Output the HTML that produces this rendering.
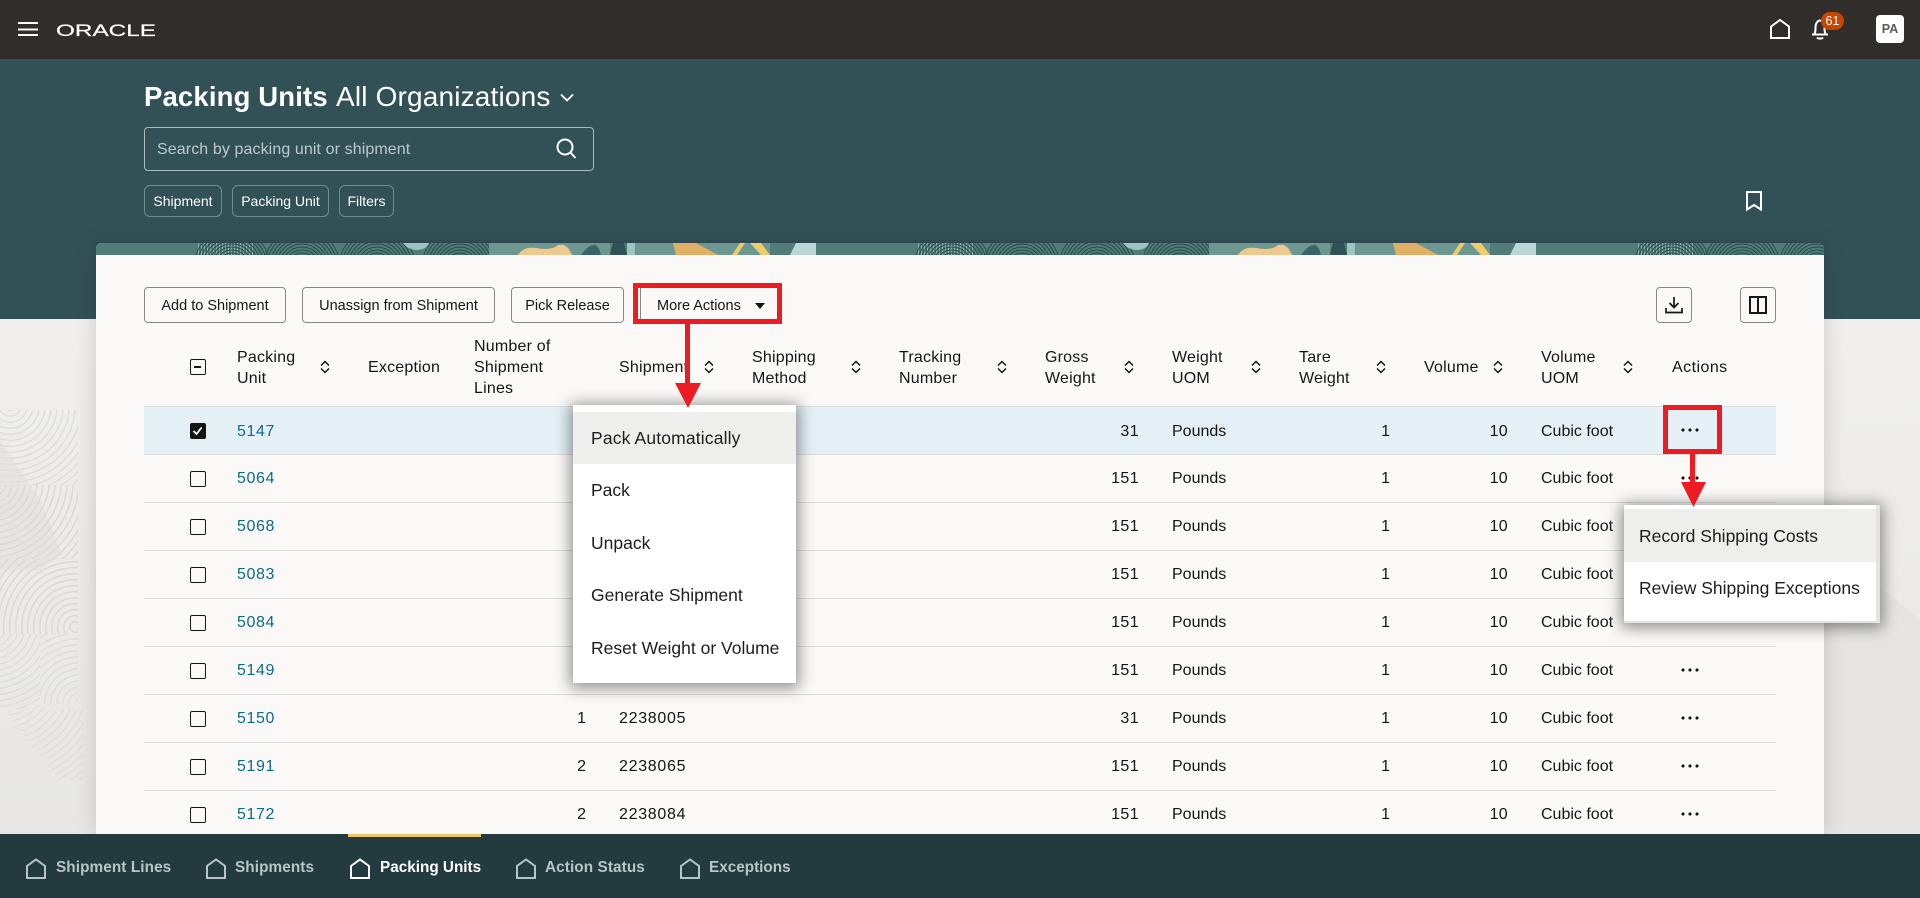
<!DOCTYPE html>
<html lang="en"><head><meta charset="utf-8"><title>Packing Units</title>
<style>
*{box-sizing:border-box;margin:0;padding:0}
html,body{width:1920px;height:898px;overflow:hidden}
body{position:relative;font-family:"Liberation Sans",Arial,sans-serif;color:#161513;background:linear-gradient(180deg,#f0efed 319px,#e8e7e5 834px)}
span,svg{position:absolute;white-space:nowrap}
#top{position:absolute;left:0;top:0;width:1920px;height:59px;background:#312d2a}
#teal{position:absolute;left:0;top:59px;width:1920px;height:260px;background:#325157}
.chip{position:absolute;top:185px;height:32px;border:1px solid #6f8b8e;border-radius:6px;color:#fff;font-size:14px;line-height:30px;text-align:center}
.deco{position:absolute;width:78px;height:75px}
#card{position:absolute;left:96px;top:243px;width:1728px;height:591px;background:#faf9f7;border-radius:6px 6px 0 0;box-shadow:0 0 22px rgba(0,0,0,.16)}
.btn{position:absolute;top:287px;height:36px;border:1px solid #8a8885;border-radius:4px;font-size:14.5px;line-height:36px;text-align:center;background:#faf9f7}
.h{position:absolute;font-size:16px;line-height:21px;letter-spacing:.2px;color:#161513}
.so{position:absolute;top:360px;width:10px;height:14px;fill:none;stroke:#161513;stroke-width:1.5}
.r{position:absolute;left:144px;width:1632px;height:49px;border-bottom:1px solid #dfddd9;font-size:16px;line-height:49px}
.r>*{position:absolute}
.sel{background:#e4f0f6;border-top:1px solid #d9dfe2}
.cb{left:46px;top:17px;width:16px;height:16px;border:1.6px solid #161513;border-radius:2px;background:#faf9f7}
.cb.on{background:#161513;top:16px}
.l{left:93px;color:#0d6a8c;letter-spacing:.6px}
.n{right:1190px}.sh{left:475px;letter-spacing:.7px}
.g{right:637px;letter-spacing:.4px}.p{left:1028px}.t{right:386px}.v{right:268px;letter-spacing:.3px}.u{left:1397px}
.d{left:1537px;top:22px;width:18px;height:4px;background:radial-gradient(circle at 2px 2px,#161513 1.4px,transparent 1.8px) 0 0/7px 4px repeat-x}
.sel .d{top:21px}
.menu{position:absolute;background:#fff;box-shadow:0 2px 14px 3px rgba(0,0,0,.42)}
.mi{position:absolute;left:0;width:100%;font-size:17.5px;color:#1f1d1b}
.mi.hv{background:#eeeeec}
#bar{position:absolute;left:0;top:834px;width:1920px;height:64px;background:#233a3f}
.tab{position:absolute;top:24px;font-size:15.3px;font-weight:700;line-height:20px;letter-spacing:.1px;color:#b8c5c7}
.ti{position:absolute;top:24px;width:22px;height:21px;fill:none;stroke:#b8c5c7;stroke-width:2}
.red{position:absolute;background:#ed1c24}
.box{position:absolute;border:5px solid #ed1c24}
</style></head><body>

<svg style="left:0;top:440px" width="96" height="130"><path d="M0 0L40 60 62 115 40 130H0Z" fill="#e6e5e3"/></svg>
<div class="deco" style="left:0;top:410px;background:repeating-radial-gradient(circle at 10px -5px,transparent 0 4.5px,#dededc 4.5px 6px)"></div>
<div class="deco" style="left:0;top:485px;height:74px;background:repeating-radial-gradient(circle at -10px -5px,transparent 0 4.5px,#dbdad8 4.5px 6px)"></div>
<div class="deco" style="left:0;top:559px;background:repeating-radial-gradient(circle at 75px 68px,transparent 0 4.5px,#dbdad8 4.5px 6px)"></div>
<div class="deco" style="left:0;top:634px;width:40px;background:repeating-radial-gradient(circle at -10px -10px,transparent 0 4.5px,#dededc 4.5px 6px)"></div>
<div class="deco" style="left:40px;top:634px;width:38px;height:70px;background:repeating-radial-gradient(circle at 40px 70px,transparent 0 4.5px,#dededc 4.5px 6px)"></div>
<div class="deco" style="left:5px;top:710px;height:70px;background:repeating-radial-gradient(circle at 0 -30px,transparent 0 4.5px,#e0dfdd 4.5px 6px);clip-path:polygon(0 0,100% 0,100% 100%,70% 100%)"></div>
<svg style="left:1824px;top:319px" width="96" height="515"><polygon points="20,240 96,300 96,515 0,515 0,200" fill="#e6e5e3"/></svg>

<div id="top"></div>
<div id="teal"></div>

<!-- top bar -->
<svg style="left:18px;top:21px" width="21" height="16" fill="#fff"><rect y="1" width="20" height="2"/><rect y="7.500" width="20" height="2"/><rect y="13" width="20" height="2"/></svg>
<svg style="left:56px;top:22px" width="104" height="16"><text x="0" y="14" font-family="Liberation Sans" font-size="17" fill="#fff" stroke="#fff" stroke-width=".2" textLength="100" lengthAdjust="spacingAndGlyphs">ORACLE</text></svg>
<svg style="left:1768px;top:17px" width="24" height="24" fill="none" stroke="#fff" stroke-width="2"><path d="M3 21V9.500L12 3l9 6.500V21Z"/></svg>
<svg style="left:1808px;top:17px" width="24" height="24" fill="none" stroke="#fff" stroke-width="2"><path d="M4 17.500h16M6 17.500c1.500-2 1.500-4 1.500-7 0-4 2-7 4.500-7s4.500 3 4.500 7c0 3 0 5 1.500 7M9 20.500c1 1.500 5 1.500 6 0"/></svg>
<div style="position:absolute;left:1821px;top:12px;width:23px;height:18px;border-radius:9px;background:#c74600;color:#fff;font-size:12.5px;line-height:18px;text-align:center">61</div>
<div style="position:absolute;left:1876px;top:15px;width:28px;height:28px;border-radius:4px;background:#fff;color:#5c5b59;font-size:12.5px;font-weight:700;line-height:28px;text-align:center">PA</div>

<!-- title -->
<span style="left:144px;top:79px;line-height:36px;font-size:27.5px;letter-spacing:.15px;font-weight:700;color:#fff">Packing Units</span>
<span style="left:336px;top:79px;line-height:36px;font-size:28px;letter-spacing:.17px;color:#fff">All Organizations</span>
<svg style="left:559px;top:92px" width="16" height="11" fill="none" stroke="#fff" stroke-width="1.800"><path d="M2 2.500l6 6 6-6"/></svg>
<div style="position:absolute;left:144px;top:127px;width:450px;height:44px;border:1px solid #a9babc;border-radius:4px"></div>
<span style="left:157px;top:139px;line-height:22px;font-size:16px;letter-spacing:.1px;color:#bcc9ca">Search by packing unit or shipment</span>
<svg style="left:555px;top:137px" width="22" height="22" fill="none" stroke="#fff" stroke-width="2"><circle cx="10" cy="10" r="7.500"/><path d="M15.500 15.500l5 5.500"/></svg>
<div class="chip" style="left:144px;width:78px">Shipment</div>
<div class="chip" style="left:232px;width:97px">Packing Unit</div>
<div class="chip" style="left:339px;width:55px">Filters</div>
<svg style="left:1745px;top:190px" width="18" height="22" fill="none" stroke="#fff" stroke-width="2"><path d="M2 2h14v17.500L9 15l-7 4.500Z"/></svg>

<!-- card -->
<div id="card"></div>
<svg style="left:96px;top:243px;border-radius:6px 6px 0 0" width="1728" height="12">
<defs>
<pattern id="vl" width="3" height="12" patternUnits="userSpaceOnUse"><rect width="1" height="12" fill="#8fb2ae"/></pattern>
<g id="dome" fill="none" stroke="#27494b" stroke-width="1"><circle r="8"/><circle r="11"/><circle r="14"/><circle r="17"/><circle r="20"/><circle r="23"/><circle r="26"/><circle r="29"/><circle r="32"/><circle r="35"/><circle r="38"/></g>
<g id="tile">
<rect x="0" width="760" height="12" fill="#517d79"/>
<rect x="100" width="58" height="12" fill="url(#vl)"/>
<use href="#dome" x="136" y="24"/><use href="#dome" x="206" y="24"/><use href="#dome" x="281" y="24"/><use href="#dome" x="364" y="24"/>
<path d="M307 0H333Q331 6 322 7 312 7 307 0Z" fill="#9cc4c3"/>
<rect x="393" width="121" height="12" fill="#6d9891"/>
<path d="M422 12Q428 3 440 5 455 8 462 2 470 0 474 8L476 12Z" fill="#edc98f"/>
<path d="M485 12Q493 1 500 2 504 6 505 12Z" fill="#3a6365"/>
<path d="M517 0H528L531 12H514Z" fill="#325157"/>
<rect x="531" width="143" height="12" fill="#6d9891"/>
<rect x="531" width="8" height="12" fill="#9cc4c3"/>
<path d="M577 0H600L622 12H580Z" fill="#e0b066"/>
<path d="M644 0H649L641 12H636ZM654 0H665L674 12H665Z" fill="#eecb6c"/>
<path d="M700 0H730L737 12H694Z" fill="#bcd6d8"/>
<path d="M773 0H778L775 12H768Z" fill="#e0895a"/>
<path d="M780 0H796L800 12H776Z" fill="#325157"/>
</g>
</defs>
<use href="#tile" x="-720"/><use href="#tile" x="0"/><use href="#tile" x="720"/><use href="#tile" x="1440"/>
</svg>

<!-- toolbar -->
<div class="btn" style="left:144px;width:142px">Add to Shipment</div>
<div class="btn" style="left:302px;width:193px">Unassign from Shipment</div>
<div class="btn" style="left:511px;width:113px">Pick Release</div>
<div class="btn" style="left:640px;width:138px;text-align:left;padding-left:16px;border-right:0;border-top:0;border-bottom:0;border-radius:0;line-height:38px">More Actions</div>
<svg style="left:755px;top:303px" width="10" height="6"><path d="M0 0h10L5 6Z" fill="#161513"/></svg>
<div class="btn" style="left:1656px;width:36px"></div>
<svg style="left:1664px;top:295px" width="20" height="20" fill="none" stroke="#161513" stroke-width="1.700"><path d="M10 2v10M5.500 8l4.500 4.500L14.500 8M2 13v4.500h16V13"/></svg>
<div class="btn" style="left:1740px;width:36px"></div>
<svg style="left:1749px;top:296px" width="18" height="18" fill="none" stroke="#161513" stroke-width="2"><rect x="1" y="1" width="16" height="16"/><path d="M9 1v16"/></svg>

<!-- table header -->
<div style="position:absolute;left:190px;top:359px;width:16px;height:16px;border:1.6px solid #161513;border-radius:2px"><div style="position:absolute;left:3px;top:5.500px;width:7px;height:2px;background:#161513"></div></div>
<div class="h" style="left:237px;top:347px">Packing<br>Unit</div>
<div class="h" style="left:368px;top:357px">Exception</div>
<div class="h" style="left:474px;top:336px">Number of<br>Shipment<br>Lines</div>
<div class="h" style="left:619px;top:357px">Shipment</div>
<div class="h" style="left:752px;top:347px">Shipping<br>Method</div>
<div class="h" style="left:899px;top:347px">Tracking<br>Number</div>
<div class="h" style="left:1045px;top:347px">Gross<br>Weight</div>
<div class="h" style="left:1172px;top:347px">Weight<br>UOM</div>
<div class="h" style="left:1299px;top:347px">Tare<br>Weight</div>
<div class="h" style="left:1424px;top:357px">Volume</div>
<div class="h" style="left:1541px;top:347px">Volume<br>UOM</div>
<div class="h" style="left:1672px;top:357px;letter-spacing:.45px">Actions</div>
<svg width="0" height="0"><defs><path id="sr" d="M1 5.500L5 1.500L9 5.500M1 8.500L5 12.500L9 8.500"/></defs></svg>
<svg class="so" style="left:320px"><use href="#sr"/></svg>
<svg class="so" style="left:704px"><use href="#sr"/></svg>
<svg class="so" style="left:851px"><use href="#sr"/></svg>
<svg class="so" style="left:997px"><use href="#sr"/></svg>
<svg class="so" style="left:1124px"><use href="#sr"/></svg>
<svg class="so" style="left:1251px"><use href="#sr"/></svg>
<svg class="so" style="left:1376px"><use href="#sr"/></svg>
<svg class="so" style="left:1493px"><use href="#sr"/></svg>
<svg class="so" style="left:1623px"><use href="#sr"/></svg>

<!-- rows -->
<div class="r sel" style="top:406px"><div class="cb on"><svg style="left:1px;top:2px" width="11" height="10" fill="none" stroke="#fff" stroke-width="1.800"><path d="M1.500 5l3 3 5-6.500"/></svg></div><a class="l">5147</a><div class="g">31</div><div class="p">Pounds</div><div class="t">1</div><div class="v">10</div><div class="u">Cubic foot</div><div class="d"></div></div>
<div class="r" style="top:454px"><div class="cb"></div><a class="l">5064</a><div class="g">151</div><div class="p">Pounds</div><div class="t">1</div><div class="v">10</div><div class="u">Cubic foot</div><div class="d"></div></div>
<div class="r" style="top:502px"><div class="cb"></div><a class="l">5068</a><div class="g">151</div><div class="p">Pounds</div><div class="t">1</div><div class="v">10</div><div class="u">Cubic foot</div></div>
<div class="r" style="top:550px"><div class="cb"></div><a class="l">5083</a><div class="g">151</div><div class="p">Pounds</div><div class="t">1</div><div class="v">10</div><div class="u">Cubic foot</div></div>
<div class="r" style="top:598px"><div class="cb"></div><a class="l">5084</a><div class="g">151</div><div class="p">Pounds</div><div class="t">1</div><div class="v">10</div><div class="u">Cubic foot</div></div>
<div class="r" style="top:646px"><div class="cb"></div><a class="l">5149</a><div class="g">151</div><div class="p">Pounds</div><div class="t">1</div><div class="v">10</div><div class="u">Cubic foot</div><div class="d"></div></div>
<div class="r" style="top:694px"><div class="cb"></div><a class="l">5150</a><div class="n">1</div><div class="sh">2238005</div><div class="g">31</div><div class="p">Pounds</div><div class="t">1</div><div class="v">10</div><div class="u">Cubic foot</div><div class="d"></div></div>
<div class="r" style="top:742px"><div class="cb"></div><a class="l">5191</a><div class="n">2</div><div class="sh">2238065</div><div class="g">151</div><div class="p">Pounds</div><div class="t">1</div><div class="v">10</div><div class="u">Cubic foot</div><div class="d"></div></div>
<div class="r" style="top:790px"><div class="cb"></div><a class="l">5172</a><div class="n">2</div><div class="sh">2238084</div><div class="g">151</div><div class="p">Pounds</div><div class="t">1</div><div class="v">10</div><div class="u">Cubic foot</div><div class="d"></div></div>

<!-- more actions menu -->
<div class="menu" style="left:573px;top:405px;width:223px;height:278px">
<div class="mi hv" style="top:7px;height:52px;line-height:52px;padding-left:18px;letter-spacing:.15px">Pack Automatically</div>
<div class="mi" style="top:59px;height:52px;line-height:53px;padding-left:18px">Pack</div>
<div class="mi" style="top:112px;height:52px;line-height:52px;padding-left:18px">Unpack</div>
<div class="mi" style="top:164px;height:52px;line-height:52px;padding-left:18px">Generate Shipment</div>
<div class="mi" style="top:217px;height:52px;line-height:52px;padding-left:18px">Reset Weight or Volume</div>
</div>

<!-- row actions menu -->
<div class="menu" style="left:1624px;top:505px;width:256px;height:118px;border-right:4px solid #e4e3e1;border-bottom:2px solid #e4e3e1">
<div class="mi hv" style="top:4px;height:53px;line-height:54px;padding-left:15px">Record Shipping Costs</div>
<div class="mi" style="top:57px;height:52px;line-height:52px;padding-left:15px">Review Shipping Exceptions</div>
</div>

<!-- bottom bar -->
<div id="bar">
<div style="position:absolute;left:348px;top:0;width:133px;height:3px;background:#eec762"></div>
<svg class="ti" style="left:25px"><path d="M2 20V8L11 1.500 20 8V20Z"/></svg><div class="tab" style="left:56px">Shipment Lines</div>
<svg class="ti" style="left:205px"><path d="M2 20V8L11 1.500 20 8V20Z"/></svg><div class="tab" style="left:235px">Shipments</div>
<svg class="ti" style="left:349px;stroke:#fff"><path d="M2 20V8L11 1.500 20 8V20Z"/></svg><div class="tab" style="left:380px;color:#fff;letter-spacing:0">Packing Units</div>
<svg class="ti" style="left:515px"><path d="M2 20V8L11 1.500 20 8V20Z"/></svg><div class="tab" style="left:545px">Action Status</div>
<svg class="ti" style="left:679px"><path d="M2 20V8L11 1.500 20 8V20Z"/></svg><div class="tab" style="left:709px;letter-spacing:0">Exceptions</div>
</div>

<!-- annotations -->
<div class="box" style="left:633px;top:283px;width:149px;height:41px"></div>
<div class="red" style="left:685px;top:324px;width:5px;height:60px"></div>
<svg style="left:675px;top:383px" width="26" height="25"><path d="M0 0H26L13 25Z" fill="#ed1c24"/></svg>
<div class="box" style="left:1663px;top:405px;width:59px;height:49px"></div>
<div class="red" style="left:1690px;top:454px;width:5px;height:29px"></div>
<svg style="left:1681px;top:482px" width="25" height="25"><path d="M0 0H25L12.500 25Z" fill="#ed1c24"/></svg>
</body></html>
